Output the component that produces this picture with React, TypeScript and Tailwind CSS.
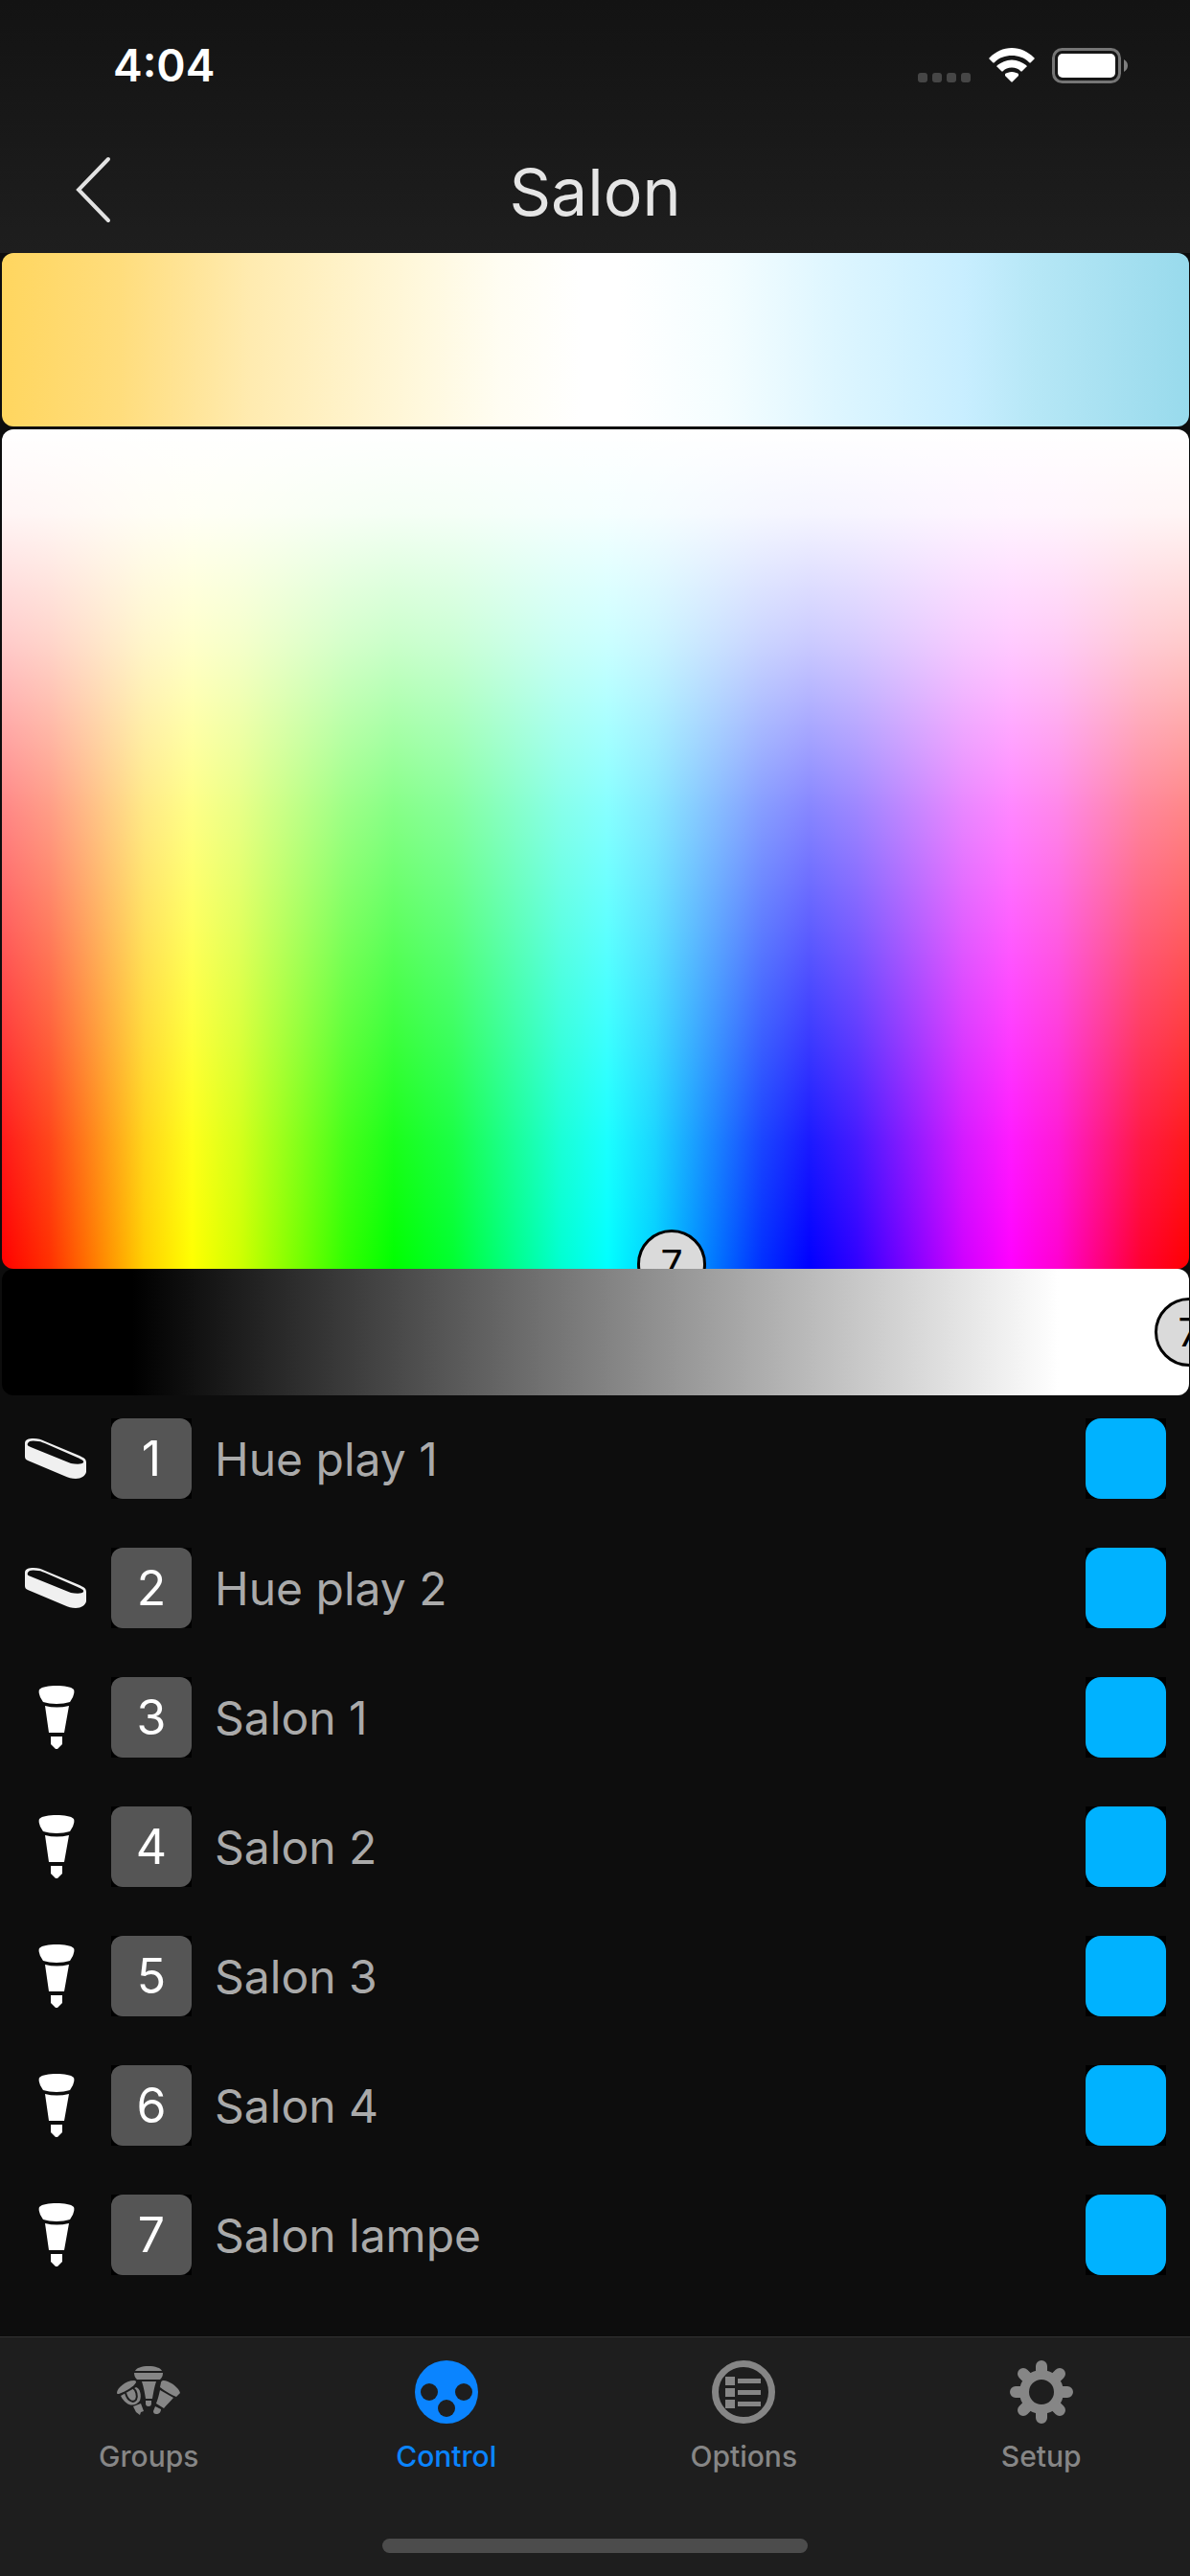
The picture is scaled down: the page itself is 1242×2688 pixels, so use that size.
import React, { useState } from "react";

type Light = {
  id: number;
  name: string;
  kind: "bar" | "bulb";
};

const lights: Light[] = [
  { id: 1, name: "Hue play 1", kind: "bar" },
  { id: 2, name: "Hue play 2", kind: "bar" },
  { id: 3, name: "Salon 1", kind: "bulb" },
  { id: 4, name: "Salon 2", kind: "bulb" },
  { id: 5, name: "Salon 3", kind: "bulb" },
  { id: 6, name: "Salon 4", kind: "bulb" },
  { id: 7, name: "Salon lampe", kind: "bulb" },
];

function PlayBarIcon() {
  return (
    <svg viewBox="0 0 66 66" className="size-[66px]" aria-hidden="true">
      <path
        d="M1 17 C1 13 5 12 10 12 C15 12 18 13 22 15 L58 30 C62 32 65 33 65 37 L65 47 C64 51 60 54 54 54 C50 54 46 53 42 51 L4 35 C2 34 1 33 1 31 Z"
        fill="#f0f0f0"
      />
      <path
        d="M4 17 C5 14 10 14 15 15 C18 15 21 17 24 18 L56 32 C60 34 63 35 62 37 C61 39 55 39 49 38 L44 36 L7 21 C4 20 3 19 4 17 Z"
        fill="#0d0d0d"
      />
    </svg>
  );
}

function BulbIcon() {
  return (
    <svg viewBox="0 0 66 66" className="size-[66px]" aria-hidden="true" fill="#fff">
      <path d="M16 4 C19 1 26 0 34 0 C42 0 49 1 52 4 C53 6 52 9 51 12 L48 17 C44 18 39 19 34 19 C29 19 24 18 20 17 L17 12 C16 9 15 6 16 4 Z" />
      <path d="M22 21 Q34 24 47 21 L42 49 H26 Z" />
      <path d="M28 53 H40 V61 L37 64 L35 66 H33 L31 64 L28 61 Z" />
    </svg>
  );
}

function GroupsIcon() {
  return (
    <svg viewBox="0 0 66 66" className="size-[66px]" fill="currentColor" aria-hidden="true">
      <path d="M19 11 C20 8 26 6 33 6 C40 6 46 8 47 11 Z" />
      <path d="M18 13 H48 C48 16 47 18 45 20 H21 C19 18 18 16 18 13 Z" />
      <path d="M26 22 H41 C39 28 38 34 37 40 H30 C29 34 28 28 26 22 Z" />
      <path d="M30 42 H36 V45 C36 47 35 48 33 48 C31 48 30 47 30 45 Z" />
      <path d="M0 34 C0 29 9 21 18 21 C20 21 20 22 20 23 C18 27 10 32 2 35 C1 35 0 35 0 34 Z" />
      <path d="M4 37 L20 28 C24 29 26 36 24 42 C18 50 9 47 4 37 Z" />
      <path d="M17 48 L25 45 L28 53 L25 54 L24 57 L20 54 Z" />
      <path d="M9 34 C11 42 17 45 20 41 C22 37 20 31 17 29" fill="none" stroke="#1e1e1e" strokeWidth="2" />
      <path d="M46 23 C47 20 50 21 53 22 C60 25 65 30 66 34 L62 38 C57 36 50 32 45 28 Z" />
      <path d="M45 31 L59 39 C56 43 52 46 49 50 L41 45 C43 40 44 35 45 31 Z" />
      <path d="M40 48 L46 51 C46 54 44 56 41 56 C39 56 38 55 38 53 Z" />
    </svg>
  );
}

function ControlIcon() {
  return (
    <svg viewBox="0 0 66 66" className="size-[66px]" fill="currentColor" aria-hidden="true">
      <circle cx="33" cy="33" r="33" />
      <g fill="#1e1e1e">
        <circle cx="15" cy="33" r="9" />
        <circle cx="51" cy="33" r="9" />
        <circle cx="33" cy="50" r="9" />
      </g>
    </svg>
  );
}

function OptionsIcon() {
  return (
    <svg viewBox="0 0 66 66" className="size-[66px]" fill="currentColor" aria-hidden="true">
      <circle cx="33" cy="33" r="29.5" fill="none" stroke="currentColor" strokeWidth="7" />
      <path d="M14 17h10v9H14zM14 29h10v9H14zM14 41h10v9H14zM27 19h24v5H27zM27 31h24v5H27zM27 43h24v5H27z" />
    </svg>
  );
}

function SetupIcon() {
  return (
    <svg viewBox="0 0 66 66" className="size-[66px]" aria-hidden="true">
      <circle cx="33" cy="33" r="18" fill="none" stroke="currentColor" strokeWidth="10" />
      <g stroke="currentColor" strokeWidth="12" strokeLinecap="round">
        <path d="M33 6v8M33 52v8M6 33h8M52 33h8M14 14l5 5M47 47l5 5M14 52l5-5M47 19l5-5" />
      </g>
    </svg>
  );
}

const tabs = [
  { label: "Groups", icon: <GroupsIcon /> },
  { label: "Control", icon: <ControlIcon /> },
  { label: "Options", icon: <OptionsIcon /> },
  { label: "Setup", icon: <SetupIcon /> },
];

function StatusBar() {
  return (
    <div className="flex h-[136px] items-center justify-between pl-[118px] pr-[65px]">
      <p className="text-[46px] leading-none font-semibold text-white">4:04</p>
      <div className="flex items-center">
        <svg viewBox="0 0 55 37" className="mr-[19px] h-[37px] w-[55px]" fill="#464646" aria-hidden="true">
          <rect x="0" y="26" width="10" height="10" rx="3" />
          <rect x="15" y="26" width="10" height="10" rx="3" />
          <rect x="30" y="26" width="10" height="10" rx="3" />
          <rect x="45" y="26" width="10" height="10" rx="3" />
        </svg>
        <svg viewBox="0 0 48 37" className="mr-[18px] h-[37px] w-12" fill="#fff" aria-hidden="true">
          <path d="M24 0 C33 0 41 4 47 10 C48 11 48 11 47 12 L44 15 C43 16 43 16 42 15 C37 10 31 8 24 8 C17 8 11 10 6 15 C5 16 5 16 4 15 L1 12 C0 11 0 11 1 10 C7 4 15 0 24 0 Z" />
          <path d="M24 12.500 C30 12.500 35 15 39 18 C40 19 40 20 39 20 L35 24 C34 25 34 25 33 24 C31 22 28 20.500 24 20.500 C20 20.500 17 22 15 24 C14 25 14 25 13 24 L9 20 C8 20 8 19 9 18 C13 15 18 12.500 24 12.500 Z" />
          <path d="M24 25 C27 25 29 26 31 27 C31 28 31 29 31 29 L25 35 C24 36 24 36 23 35 L17 29 C17 29 17 28 17 27 C19 26 21 25 24 25 Z" />
        </svg>
        <svg viewBox="0 0 79 37" className="h-[37px] w-[79px]" aria-hidden="true">
          <rect x="1.500" y="1.500" width="69" height="34" rx="9" fill="none" stroke="#757575" strokeWidth="3" />
          <rect x="6" y="6" width="60" height="25" rx="5" fill="#fff" />
          <path d="M75 12 C78 14 79 16 79 18.500 C79 21 78 23 75 25 Z" fill="#7f7f7f" />
        </svg>
      </div>
    </div>
  );
}

function App() {
  const [activeTab, setActiveTab] = useState("Control");
  const [brightness, setBrightness] = useState(100);

  return (
    <div className="flex min-h-screen w-full flex-col bg-[#0d0d0d] font-[Inter,'Liberation_Sans',sans-serif]">
      <header className="bg-linear-to-b from-[#131313] to-[#1e1e1e]">
        <StatusBar />
        <div className="grid h-32 grid-cols-[1fr_auto_1fr] items-center">
          <button aria-label="Back" className="ml-[78px] w-10 pb-1">
            <svg viewBox="0 0 40 70" className="h-[70px] w-10" fill="none" stroke="#e2e2e2" strokeWidth="4" strokeLinecap="round" aria-hidden="true">
              <path d="M35 3 L4 35 L35 67" />
            </svg>
          </button>
          <h1 className="text-[68px] leading-none text-[#e5e5e5]">Salon</h1>
        </div>
      </header>

      <main className="flex-1">
        <div className="pr-px pl-0.5">
          {/* white temperature */}
          <div className="h-[181px] rounded-xl bg-[linear-gradient(to_right,#ffd65f_0%,#ffdd7d_10%,#ffebb0_21%,#fff8dc_35%,#fffdf2_42%,#ffffff_49%,#ffffff_52%,#f4fdff_61%,#def6ff_70%,#c8eeff_81%,#b6e7f6_87%,#98daec_100%)]" />

          {/* hue and saturation */}
          <div className="relative mt-[3px] h-[876px] overflow-hidden rounded-xl bg-[linear-gradient(to_bottom,#fff_0%,#fffffff5_10%,#ffffffcc_25%,#ffffff87_45%,#ffffff4f_65%,#ffffff1a_85%,#fff0_100%),linear-gradient(to_right,#f00_0%,#ff3000_4%,#ff8000_8%,#ffd000_12%,#ff0_16%,#d0ff00_20%,#30ff00_29%,#0f0_33%,#00ff30_38%,#00ffd0_47%,#0ff_51%,#00d0ff_55%,#0030ff_64%,#00f_68%,#3000ff_72%,#d000ff_81%,#f0f_85%,#ff00d0_89%,#ff0030_96%,#f00_100%)]">
            <button className="absolute top-[835px] left-[663px] flex size-[72px] items-center justify-center rounded-full border-3 border-black bg-[#dadada] text-[41px] leading-none">
              7
            </button>
          </div>

          {/* brightness */}
          <div className="relative h-[132px] overflow-hidden rounded-xl bg-[linear-gradient(to_right,#000_11%,#fff_89%)]">
            <span
              className="absolute top-[30px] flex size-[72px] -translate-x-1/2 items-center justify-center rounded-full border-3 border-black bg-[#dadada] text-[41px] leading-none"
              style={{ left: brightness + "%" }}
            >
              7
            </span>
            <input
              type="range"
              aria-label="Brightness"
              value={brightness}
              onChange={(e) => setBrightness(Number(e.target.value))}
              className="absolute inset-0 size-full cursor-pointer opacity-0"
            />
          </div>
        </div>

        <ul>
          {lights.map((light) => (
            <li key={light.id} className="flex h-[135px] items-start px-[25px] pt-6">
              <div className="flex h-[84px] w-[91px] items-center">
                {light.kind === "bar" ? <PlayBarIcon /> : <BulbIcon />}
              </div>
              <div className="bg-black">
                <button className="flex size-[84px] items-center justify-center rounded-xl bg-[#555] text-[50px] leading-none text-white">
                  {light.id}
                </button>
              </div>
              <p className="ml-6 flex-1 text-[48px] leading-[86px] text-[#aaa]">{light.name}</p>
              <div className="bg-black">
                <button aria-label={light.name + " color"} className="block size-[84px] rounded-2xl bg-[#00b2ff]" />
              </div>
            </li>
          ))}
        </ul>
      </main>

      <footer className="border-t border-[#323232] bg-[#1e1e1e] pt-6">
        <nav className="grid h-[186px] grid-cols-4">
          {tabs.map((tab) => (
            <button
              key={tab.label}
              onClick={() => setActiveTab(tab.label)}
              className={
                "flex cursor-pointer flex-col items-center gap-4 " +
                (activeTab === tab.label ? "text-[#0a84ff]" : "text-[#868686]")
              }
            >
              {tab.icon}
              <span className="text-[30px] leading-9 font-medium">{tab.label}</span>
            </button>
          ))}
        </nav>
        <div className="mx-auto mb-6 h-[15px] w-[444px] rounded-full bg-[#4c4c4c]" />
      </footer>
    </div>
  );
}

export default App;
